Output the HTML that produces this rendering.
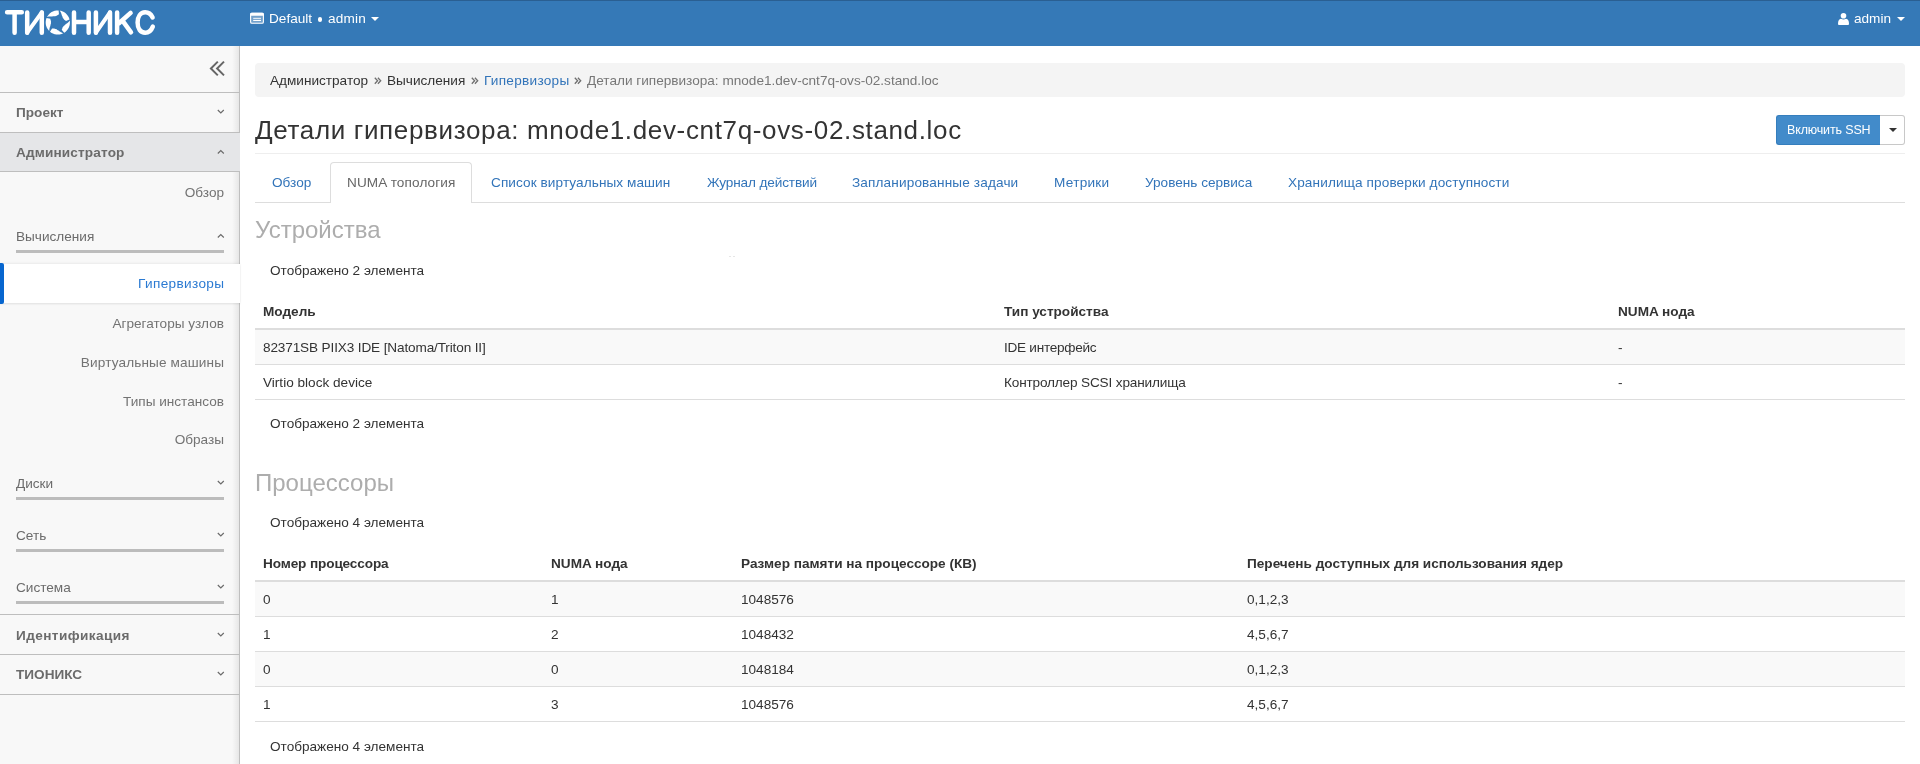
<!DOCTYPE html>
<html><head><meta charset="utf-8"><title>Детали гипервизора</title>
<style>
html,body{margin:0;padding:0;width:1920px;height:764px;overflow:hidden;background:#fff;position:relative;font-family:"Liberation Sans",sans-serif}
.t{position:absolute;white-space:nowrap;line-height:1}
.r{position:absolute}
.caret{position:absolute;width:0;height:0;border-left:4px solid transparent;border-right:4px solid transparent;border-top:4px solid #fff}
</style></head><body>
<div id="wrap" style="position:absolute;left:0;top:0;width:1920px;height:764px;overflow:hidden;will-change:transform">
<div class="r" style="left:0px;top:0px;width:1920px;height:46px;background:#3579b7;"></div>
<div class="r" style="left:0px;top:0px;width:1920px;height:1px;background:#2a5f92;"></div>
<svg class="r" style="left:0;top:0" width="170" height="46" viewBox="0 0 170 46">
<g fill="none" stroke="#fff" stroke-width="4.5" stroke-linecap="round" stroke-linejoin="round">
<path d="M7.1 12.2 H21.8 M14.6 12.2 V32.7"/>
<path d="M27.2 12.4 V32.7 M41.8 12.4 V32.7"/>
<path d="M27.2 32.7 L41.8 12.4" stroke-width="4"/>
<path d="M74 12.4 V32.7 M88.7 12.4 V32.7 M74 22 H88.7"/>
<path d="M95.9 12.4 V32.7 M110 12.4 V32.7"/>
<path d="M95.9 32.7 L110 12.4" stroke-width="4"/>
<path d="M117.1 12.4 V32.7 M119 23.2 L130.6 12.9 M123.2 21.6 L131 32.3"/>
<path d="M152.6 17.4 C150.8 13.8 148.3 12.3 145.2 12.3 C140.4 12.3 137.6 16.6 137.6 22.6 C137.6 28.6 140.4 32.7 145.2 32.7 C148.4 32.7 151 31.2 152.8 26.6"/>
</g>
<g fill="#fff"><path d="M47.02 17.01 L47.32 16.45 L47.65 15.91 L48.01 15.39 L48.40 14.89 L48.81 14.40 L49.24 13.94 L49.70 13.51 L50.19 13.10 L50.69 12.71 L51.21 12.35 L51.75 12.02 L52.31 11.72 L52.88 11.45 L53.46 11.20 L54.06 10.99 L54.67 10.81 L55.28 10.66 L55.91 10.55 L56.54 10.47 L57.17 10.42 L57.80 10.40 L58.43 10.42 L58.64 10.43 L58.96 14.28 L58.65 14.43 L58.21 14.68 L57.80 14.95 L57.42 15.24 L57.07 15.54 L56.72 15.70 L56.37 15.78 L56.03 15.88 L55.69 16.00 L55.36 16.13 L55.03 16.28 L54.64 16.30 L54.21 16.27 L53.76 16.28 L53.30 16.31 L52.84 16.37 L52.37 16.46 L51.74 16.44 L51.02 16.40 L50.28 16.41 L49.52 16.49 L48.73 16.61 L47.88 16.77 L47.02 17.01 L47.02 17.01Z"/><path d="M59.69 10.55 L60.32 10.66 L60.93 10.81 L61.54 10.99 L62.14 11.20 L62.72 11.45 L63.29 11.72 L63.85 12.02 L64.39 12.35 L64.91 12.71 L65.41 13.10 L65.90 13.51 L66.36 13.94 L66.79 14.40 L67.20 14.89 L67.59 15.39 L67.95 15.91 L68.28 16.45 L68.58 17.01 L68.85 17.58 L69.10 18.16 L69.31 18.76 L69.49 19.37 L69.54 19.57 L65.97 21.06 L65.74 20.81 L65.37 20.47 L64.98 20.17 L64.59 19.89 L64.19 19.66 L63.94 19.37 L63.75 19.06 L63.55 18.77 L63.33 18.48 L63.10 18.21 L62.86 17.95 L62.72 17.58 L62.61 17.16 L62.47 16.73 L62.30 16.31 L62.10 15.88 L61.86 15.47 L61.69 14.86 L61.51 14.17 L61.27 13.47 L60.96 12.77 L60.60 12.05 L60.18 11.29 L59.69 10.55 L59.69 10.55Z"/><path d="M69.75 20.61 L69.83 21.24 L69.88 21.87 L69.90 22.50 L69.88 23.13 L69.83 23.76 L69.75 24.39 L69.64 25.02 L69.49 25.63 L69.31 26.24 L69.10 26.84 L68.85 27.42 L68.58 27.99 L68.28 28.55 L67.95 29.09 L67.59 29.61 L67.20 30.11 L66.79 30.60 L66.36 31.06 L65.90 31.49 L65.41 31.90 L64.91 32.29 L64.39 32.65 L64.21 32.76 L61.70 29.83 L61.86 29.53 L62.07 29.07 L62.24 28.61 L62.38 28.15 L62.48 27.70 L62.67 27.37 L62.91 27.10 L63.13 26.81 L63.33 26.52 L63.52 26.22 L63.69 25.90 L64.00 25.66 L64.37 25.42 L64.73 25.16 L65.08 24.87 L65.42 24.54 L65.74 24.19 L66.26 23.84 L66.87 23.45 L67.46 23.01 L68.03 22.50 L68.60 21.93 L69.19 21.30 L69.75 20.61 L69.75 20.61Z"/><path d="M63.29 33.28 L62.72 33.55 L62.14 33.80 L61.54 34.01 L60.93 34.19 L60.32 34.34 L59.69 34.45 L59.06 34.53 L58.43 34.58 L57.80 34.60 L57.17 34.58 L56.54 34.53 L55.91 34.45 L55.28 34.34 L54.67 34.19 L54.06 34.01 L53.46 33.80 L52.88 33.55 L52.31 33.28 L51.75 32.98 L51.21 32.65 L50.69 32.29 L50.19 31.90 L50.02 31.77 L52.03 28.47 L52.37 28.53 L52.87 28.59 L53.36 28.61 L53.84 28.60 L54.30 28.56 L54.67 28.64 L55.00 28.78 L55.34 28.90 L55.69 29.00 L56.03 29.09 L56.39 29.16 L56.71 29.37 L57.05 29.65 L57.41 29.91 L57.80 30.16 L58.21 30.38 L58.65 30.58 L59.14 30.96 L59.70 31.42 L60.30 31.85 L60.96 32.23 L61.68 32.60 L62.46 32.97 L63.29 33.28 L63.29 33.28Z"/><path d="M49.24 31.06 L48.81 30.60 L48.40 30.11 L48.01 29.61 L47.65 29.09 L47.32 28.55 L47.02 27.99 L46.75 27.42 L46.50 26.84 L46.29 26.24 L46.11 25.63 L45.96 25.02 L45.85 24.39 L45.77 23.76 L45.72 23.13 L45.70 22.50 L45.72 21.87 L45.77 21.24 L45.85 20.61 L45.96 19.98 L46.11 19.37 L46.29 18.76 L46.50 18.16 L46.58 17.97 L50.34 18.86 L50.39 19.20 L50.49 19.69 L50.62 20.17 L50.77 20.62 L50.96 21.05 L51.00 21.42 L50.97 21.78 L50.95 22.14 L50.96 22.50 L50.99 22.86 L51.03 23.21 L50.93 23.59 L50.77 23.99 L50.63 24.42 L50.52 24.87 L50.44 25.33 L50.38 25.80 L50.16 26.39 L49.90 27.06 L49.68 27.77 L49.52 28.51 L49.40 29.31 L49.29 30.17 L49.24 31.06 L49.24 31.06Z"/></g>
</svg>
<svg class="r" style="left:250px;top:12px" width="14" height="12" viewBox="0 0 14 12">
<rect x="0.6" y="1.3" width="12.8" height="9.9" rx="1.3" fill="rgba(255,255,255,0.3)" stroke="#fff" stroke-width="1.1"/>
<rect x="0.3" y="0.8" width="13.4" height="3" rx="1" fill="#fff"/>
<rect x="3.2" y="5.8" width="7.8" height="1.1" fill="#fff" opacity="0.85"/>
<rect x="3.2" y="7.9" width="7.8" height="1.1" fill="#fff"/>
</svg>
<div class="t" style="top:12px;font-size:13.6px;color:#fff;left:269px;">Default</div>
<div class="r" style="left:317.7px;top:16.8px;width:4.8px;height:4.8px;border-radius:50%;background:#fff"></div>
<div class="t" style="top:12px;font-size:13.6px;color:#fff;letter-spacing:0.2px;left:328px;">admin</div>
<div class="caret" style="left:371px;top:17px"></div>
<svg class="r" style="left:1838px;top:13px" width="11" height="12" viewBox="0 0 11 12">
<circle cx="5.5" cy="2.8" r="2.8" fill="#fff"/>
<path d="M0 11 Q0 6.2 3 5.8 Q5.5 7 8 5.8 Q11 6.2 11 11 Q11 12 10 12 H1 Q0 12 0 11Z" fill="#fff"/>
</svg>
<div class="t" style="top:12px;font-size:13.6px;color:#fff;left:1854px;">admin</div>
<div class="caret" style="left:1897px;top:17px"></div>
<div class="r" style="left:0px;top:46px;width:240px;height:718px;background:#f8f8f8;"></div>
<div class="r" style="left:232px;top:46px;width:7px;height:718px;background:linear-gradient(to right,rgba(0,0,0,0),rgba(0,0,0,0.07))"></div>
<div class="r" style="left:239px;top:46px;width:1px;height:718px;background:#bfbfbf;"></div>
<svg class="r" style="left:208px;top:59px" width="18" height="19" viewBox="0 0 18 19">
<path d="M9.8 2.6 L2.9 9.5 L9.8 16.4 M16 2.6 L9.1 9.5 L16 16.4" fill="none" stroke="#666" stroke-width="2"/>
</svg>
<div class="r" style="left:0px;top:92px;width:240px;height:1px;background:#bebebe;"></div>
<div class="t" style="top:106px;font-size:13.6px;color:#6b6b6b;font-weight:700;left:16px;">Проект</div>
<svg class="r" style="left:217px;top:108.6px" width="8" height="6" viewBox="0 0 8 6"><path d="M0.8 1 L3.8 4 L6.8 1" fill="none" stroke="#6a6a6a" stroke-width="1.15"/></svg>
<div class="r" style="left:0px;top:132px;width:240px;height:1px;background:#bebebe;"></div>
<div class="r" style="left:0px;top:133px;width:240px;height:38px;background:#e5e6e8;"></div>
<div class="t" style="top:146px;font-size:13.6px;color:#6b6b6b;font-weight:700;letter-spacing:0.15px;left:16px;">Администратор</div>
<svg class="r" style="left:217px;top:148.6px" width="8" height="6" viewBox="0 0 8 6"><path d="M0.8 4.5 L3.8 1.5 L6.8 4.5" fill="none" stroke="#6a6a6a" stroke-width="1.15"/></svg>
<div class="r" style="left:0px;top:171px;width:240px;height:1px;background:#bebebe;"></div>
<div class="t" style="top:186px;font-size:13.6px;color:#737373;right:1696px;">Обзор</div>
<div class="t" style="top:230px;font-size:13.6px;color:#6b6b6b;left:16px;">Вычисления</div>
<svg class="r" style="left:217px;top:232.6px" width="8" height="6" viewBox="0 0 8 6"><path d="M0.8 4.5 L3.8 1.5 L6.8 4.5" fill="none" stroke="#6a6a6a" stroke-width="1.15"/></svg>
<div class="r" style="left:16px;top:250px;width:208px;height:3px;background:#bcbcbc;"></div>
<div class="r" style="left:0;top:263.6px;width:240px;height:39.4px;background:#fff;box-shadow:0 1px 2px rgba(0,0,0,0.10),0 -1px 2px rgba(0,0,0,0.06)"></div>
<div class="r" style="left:0;top:263px;width:4px;height:41px;background:#0766cf;border-radius:0 2px 2px 0"></div>
<div class="t" style="top:277px;font-size:13.6px;color:#2b7ad2;letter-spacing:0.35px;right:1695.65px;">Гипервизоры</div>
<div class="t" style="top:317px;font-size:13.6px;color:#737373;right:1696px;">Агрегаторы узлов</div>
<div class="t" style="top:356px;font-size:13.6px;color:#737373;letter-spacing:0.14px;right:1695.86px;">Виртуальные машины</div>
<div class="t" style="top:395px;font-size:13.6px;color:#737373;right:1696px;">Типы инстансов</div>
<div class="t" style="top:433px;font-size:13.6px;color:#737373;right:1696px;">Образы</div>
<div class="t" style="top:477px;font-size:13.6px;color:#6b6b6b;left:16px;">Диски</div>
<svg class="r" style="left:217px;top:479.6px" width="8" height="6" viewBox="0 0 8 6"><path d="M0.8 1 L3.8 4 L6.8 1" fill="none" stroke="#6a6a6a" stroke-width="1.15"/></svg>
<div class="r" style="left:16px;top:497px;width:208px;height:3px;background:#bcbcbc;"></div>
<div class="t" style="top:529px;font-size:13.6px;color:#6b6b6b;left:16px;">Сеть</div>
<svg class="r" style="left:217px;top:531.6px" width="8" height="6" viewBox="0 0 8 6"><path d="M0.8 1 L3.8 4 L6.8 1" fill="none" stroke="#6a6a6a" stroke-width="1.15"/></svg>
<div class="r" style="left:16px;top:549px;width:208px;height:3px;background:#bcbcbc;"></div>
<div class="t" style="top:581px;font-size:13.6px;color:#6b6b6b;left:16px;">Система</div>
<svg class="r" style="left:217px;top:583.6px" width="8" height="6" viewBox="0 0 8 6"><path d="M0.8 1 L3.8 4 L6.8 1" fill="none" stroke="#6a6a6a" stroke-width="1.15"/></svg>
<div class="r" style="left:16px;top:601px;width:208px;height:3px;background:#bcbcbc;"></div>
<div class="r" style="left:0px;top:614px;width:240px;height:1px;background:#bebebe;"></div>
<div class="t" style="top:629px;font-size:13.6px;color:#6b6b6b;font-weight:700;letter-spacing:0.42px;left:16px;">Идентификация</div>
<svg class="r" style="left:217px;top:631.6px" width="8" height="6" viewBox="0 0 8 6"><path d="M0.8 1 L3.8 4 L6.8 1" fill="none" stroke="#6a6a6a" stroke-width="1.15"/></svg>
<div class="r" style="left:0px;top:654px;width:240px;height:1px;background:#bebebe;"></div>
<div class="t" style="top:668px;font-size:13.6px;color:#6b6b6b;font-weight:700;left:16px;">ТИОНИКС</div>
<svg class="r" style="left:217px;top:670.6px" width="8" height="6" viewBox="0 0 8 6"><path d="M0.8 1 L3.8 4 L6.8 1" fill="none" stroke="#6a6a6a" stroke-width="1.15"/></svg>
<div class="r" style="left:0px;top:694px;width:240px;height:1px;background:#bebebe;"></div>
<div class="r" style="left:255px;top:63px;width:1650px;height:34px;background:#f4f4f4;border-radius:4px"></div>
<div class="t" style="top:74px;font-size:13.6px;color:#333;left:270px;">Администратор</div>
<svg class="r" style="left:374px;top:77px" width="8" height="8" viewBox="0 0 8 8"><path d="M0.8 0.8 L3.6 3.8 L0.8 6.8 M3.9 0.8 L6.7 3.8 L3.9 6.8" fill="none" stroke="#6f6f6f" stroke-width="1.3"/></svg>
<div class="t" style="top:74px;font-size:13.6px;color:#333;left:387px;">Вычисления</div>
<svg class="r" style="left:471px;top:77px" width="8" height="8" viewBox="0 0 8 8"><path d="M0.8 0.8 L3.6 3.8 L0.8 6.8 M3.9 0.8 L6.7 3.8 L3.9 6.8" fill="none" stroke="#6f6f6f" stroke-width="1.3"/></svg>
<div class="t" style="top:74px;font-size:13.6px;color:#3274b9;letter-spacing:0.27px;left:484px;">Гипервизоры</div>
<svg class="r" style="left:574px;top:77px" width="8" height="8" viewBox="0 0 8 8"><path d="M0.8 0.8 L3.6 3.8 L0.8 6.8 M3.9 0.8 L6.7 3.8 L3.9 6.8" fill="none" stroke="#6f6f6f" stroke-width="1.3"/></svg>
<div class="t" style="top:74px;font-size:13.6px;color:#777;left:587px;">Детали гипервизора: mnode1.dev-cnt7q-ovs-02.stand.loc</div>
<div class="t" style="top:117px;font-size:26px;color:#333;letter-spacing:0.65px;left:255px;">Детали гипервизора: mnode1.dev-cnt7q-ovs-02.stand.loc</div>
<div class="r" style="left:1776px;top:115px;width:103px;height:28px;background:#428bca;border:1px solid #357ebd;border-right:none;border-radius:3px 0 0 3px"></div>
<div class="t" style="top:124px;font-size:12.5px;color:#fff;letter-spacing:-0.15px;left:1787px;">Включить SSH</div>
<div class="r" style="left:1880px;top:115px;width:24px;height:28px;background:#fff;border:1px solid #c8c8c8;border-left:none;border-radius:0 3px 3px 0"></div>
<div class="caret" style="left:1889px;top:128px;border-top-color:#333"></div>
<div class="r" style="left:255px;top:153px;width:1650px;height:1px;background:#eee;"></div>
<div class="r" style="left:255px;top:202px;width:1650px;height:1px;background:#ddd;"></div>
<div class="r" style="left:330px;top:162px;width:140px;height:40px;background:#fff;border:1px solid #ddd;border-bottom:none;border-radius:4px 4px 0 0"></div>
<div class="r" style="left:331px;top:202px;width:140px;height:1px;background:#fff;"></div>
<div class="t" style="top:176px;font-size:13.6px;color:#3274b9;left:272px;">Обзор</div>
<div class="t" style="top:176px;font-size:13.6px;color:#666;letter-spacing:0.12px;left:347px;">NUMA топология</div>
<div class="t" style="top:176px;font-size:13.6px;color:#3274b9;letter-spacing:0.08px;left:491px;">Список виртуальных машин</div>
<div class="t" style="top:176px;font-size:13.6px;color:#3274b9;letter-spacing:-0.13px;left:707px;">Журнал действий</div>
<div class="t" style="top:176px;font-size:13.6px;color:#3274b9;letter-spacing:0.14px;left:852px;">Запланированные задачи</div>
<div class="t" style="top:176px;font-size:13.6px;color:#3274b9;letter-spacing:0.28px;left:1054px;">Метрики</div>
<div class="t" style="top:176px;font-size:13.6px;color:#3274b9;left:1145px;">Уровень сервиса</div>
<div class="t" style="top:176px;font-size:13.6px;color:#3274b9;letter-spacing:0.12px;left:1288px;">Хранилища проверки доступности</div>
<div class="t" style="top:218px;font-size:24px;color:#adadad;left:255px;">Устройства</div>
<div class="t" style="top:264px;font-size:13.6px;color:#333;left:270px;">Отображено 2 элемента</div>
<div class="r" style="left:729px;top:256px;width:2px;height:1px;background:#e6e6e6;"></div>
<div class="r" style="left:733px;top:256px;width:2px;height:1px;background:#e6e6e6;"></div>
<div class="t" style="top:305px;font-size:13.6px;color:#333;font-weight:700;left:263px;">Модель</div>
<div class="t" style="top:305px;font-size:13.6px;color:#333;font-weight:700;left:1004px;">Тип устройства</div>
<div class="t" style="top:305px;font-size:13.6px;color:#333;font-weight:700;left:1618px;">NUMA нода</div>
<div class="r" style="left:255px;top:328px;width:1650px;height:2px;background:#ddd;"></div>
<div class="r" style="left:255px;top:330px;width:1650px;height:34px;background:#f9f9f9;"></div>
<div class="r" style="left:255px;top:364px;width:1650px;height:1px;background:#ddd;"></div>
<div class="r" style="left:255px;top:399px;width:1650px;height:1px;background:#ddd;"></div>
<div class="t" style="top:341px;font-size:13.6px;color:#333;letter-spacing:-0.14px;left:263px;">82371SB PIIX3 IDE [Natoma/Triton II]</div>
<div class="t" style="top:341px;font-size:13.6px;color:#333;letter-spacing:-0.27px;left:1004px;">IDE интерфейс</div>
<div class="t" style="top:341px;font-size:13.6px;color:#333;left:1618px;">-</div>
<div class="t" style="top:376px;font-size:13.6px;color:#333;left:263px;">Virtio block device</div>
<div class="t" style="top:376px;font-size:13.6px;color:#333;letter-spacing:-0.16px;left:1004px;">Контроллер SCSI хранилища</div>
<div class="t" style="top:376px;font-size:13.6px;color:#333;left:1618px;">-</div>
<div class="t" style="top:417px;font-size:13.6px;color:#333;left:270px;">Отображено 2 элемента</div>
<div class="t" style="top:471px;font-size:24px;color:#adadad;left:255px;">Процессоры</div>
<div class="t" style="top:516px;font-size:13.6px;color:#333;left:270px;">Отображено 4 элемента</div>
<div class="t" style="top:557px;font-size:13.6px;color:#333;font-weight:700;letter-spacing:-0.12px;left:263px;">Номер процессора</div>
<div class="t" style="top:557px;font-size:13.6px;color:#333;font-weight:700;left:551px;">NUMA нода</div>
<div class="t" style="top:557px;font-size:13.6px;color:#333;font-weight:700;left:741px;">Размер памяти на процессоре (КВ)</div>
<div class="t" style="top:557px;font-size:13.6px;color:#333;font-weight:700;left:1247px;">Перечень доступных для использования ядер</div>
<div class="r" style="left:255px;top:580px;width:1650px;height:2px;background:#ddd;"></div>
<div class="r" style="left:255px;top:582px;width:1650px;height:34px;background:#f9f9f9;"></div>
<div class="r" style="left:255px;top:616px;width:1650px;height:1px;background:#ddd;"></div>
<div class="t" style="top:593px;font-size:13.6px;color:#333;left:263px;">0</div>
<div class="t" style="top:593px;font-size:13.6px;color:#333;left:551px;">1</div>
<div class="t" style="top:593px;font-size:13.6px;color:#333;left:741px;">1048576</div>
<div class="t" style="top:593px;font-size:13.6px;color:#333;left:1247px;">0,1,2,3</div>
<div class="r" style="left:255px;top:651px;width:1650px;height:1px;background:#ddd;"></div>
<div class="t" style="top:628px;font-size:13.6px;color:#333;left:263px;">1</div>
<div class="t" style="top:628px;font-size:13.6px;color:#333;left:551px;">2</div>
<div class="t" style="top:628px;font-size:13.6px;color:#333;left:741px;">1048432</div>
<div class="t" style="top:628px;font-size:13.6px;color:#333;left:1247px;">4,5,6,7</div>
<div class="r" style="left:255px;top:652px;width:1650px;height:34px;background:#f9f9f9;"></div>
<div class="r" style="left:255px;top:686px;width:1650px;height:1px;background:#ddd;"></div>
<div class="t" style="top:663px;font-size:13.6px;color:#333;left:263px;">0</div>
<div class="t" style="top:663px;font-size:13.6px;color:#333;left:551px;">0</div>
<div class="t" style="top:663px;font-size:13.6px;color:#333;left:741px;">1048184</div>
<div class="t" style="top:663px;font-size:13.6px;color:#333;left:1247px;">0,1,2,3</div>
<div class="r" style="left:255px;top:721px;width:1650px;height:1px;background:#ddd;"></div>
<div class="t" style="top:698px;font-size:13.6px;color:#333;left:263px;">1</div>
<div class="t" style="top:698px;font-size:13.6px;color:#333;left:551px;">3</div>
<div class="t" style="top:698px;font-size:13.6px;color:#333;left:741px;">1048576</div>
<div class="t" style="top:698px;font-size:13.6px;color:#333;left:1247px;">4,5,6,7</div>
<div class="t" style="top:740px;font-size:13.6px;color:#333;left:270px;">Отображено 4 элемента</div>
</div>
</body></html>
